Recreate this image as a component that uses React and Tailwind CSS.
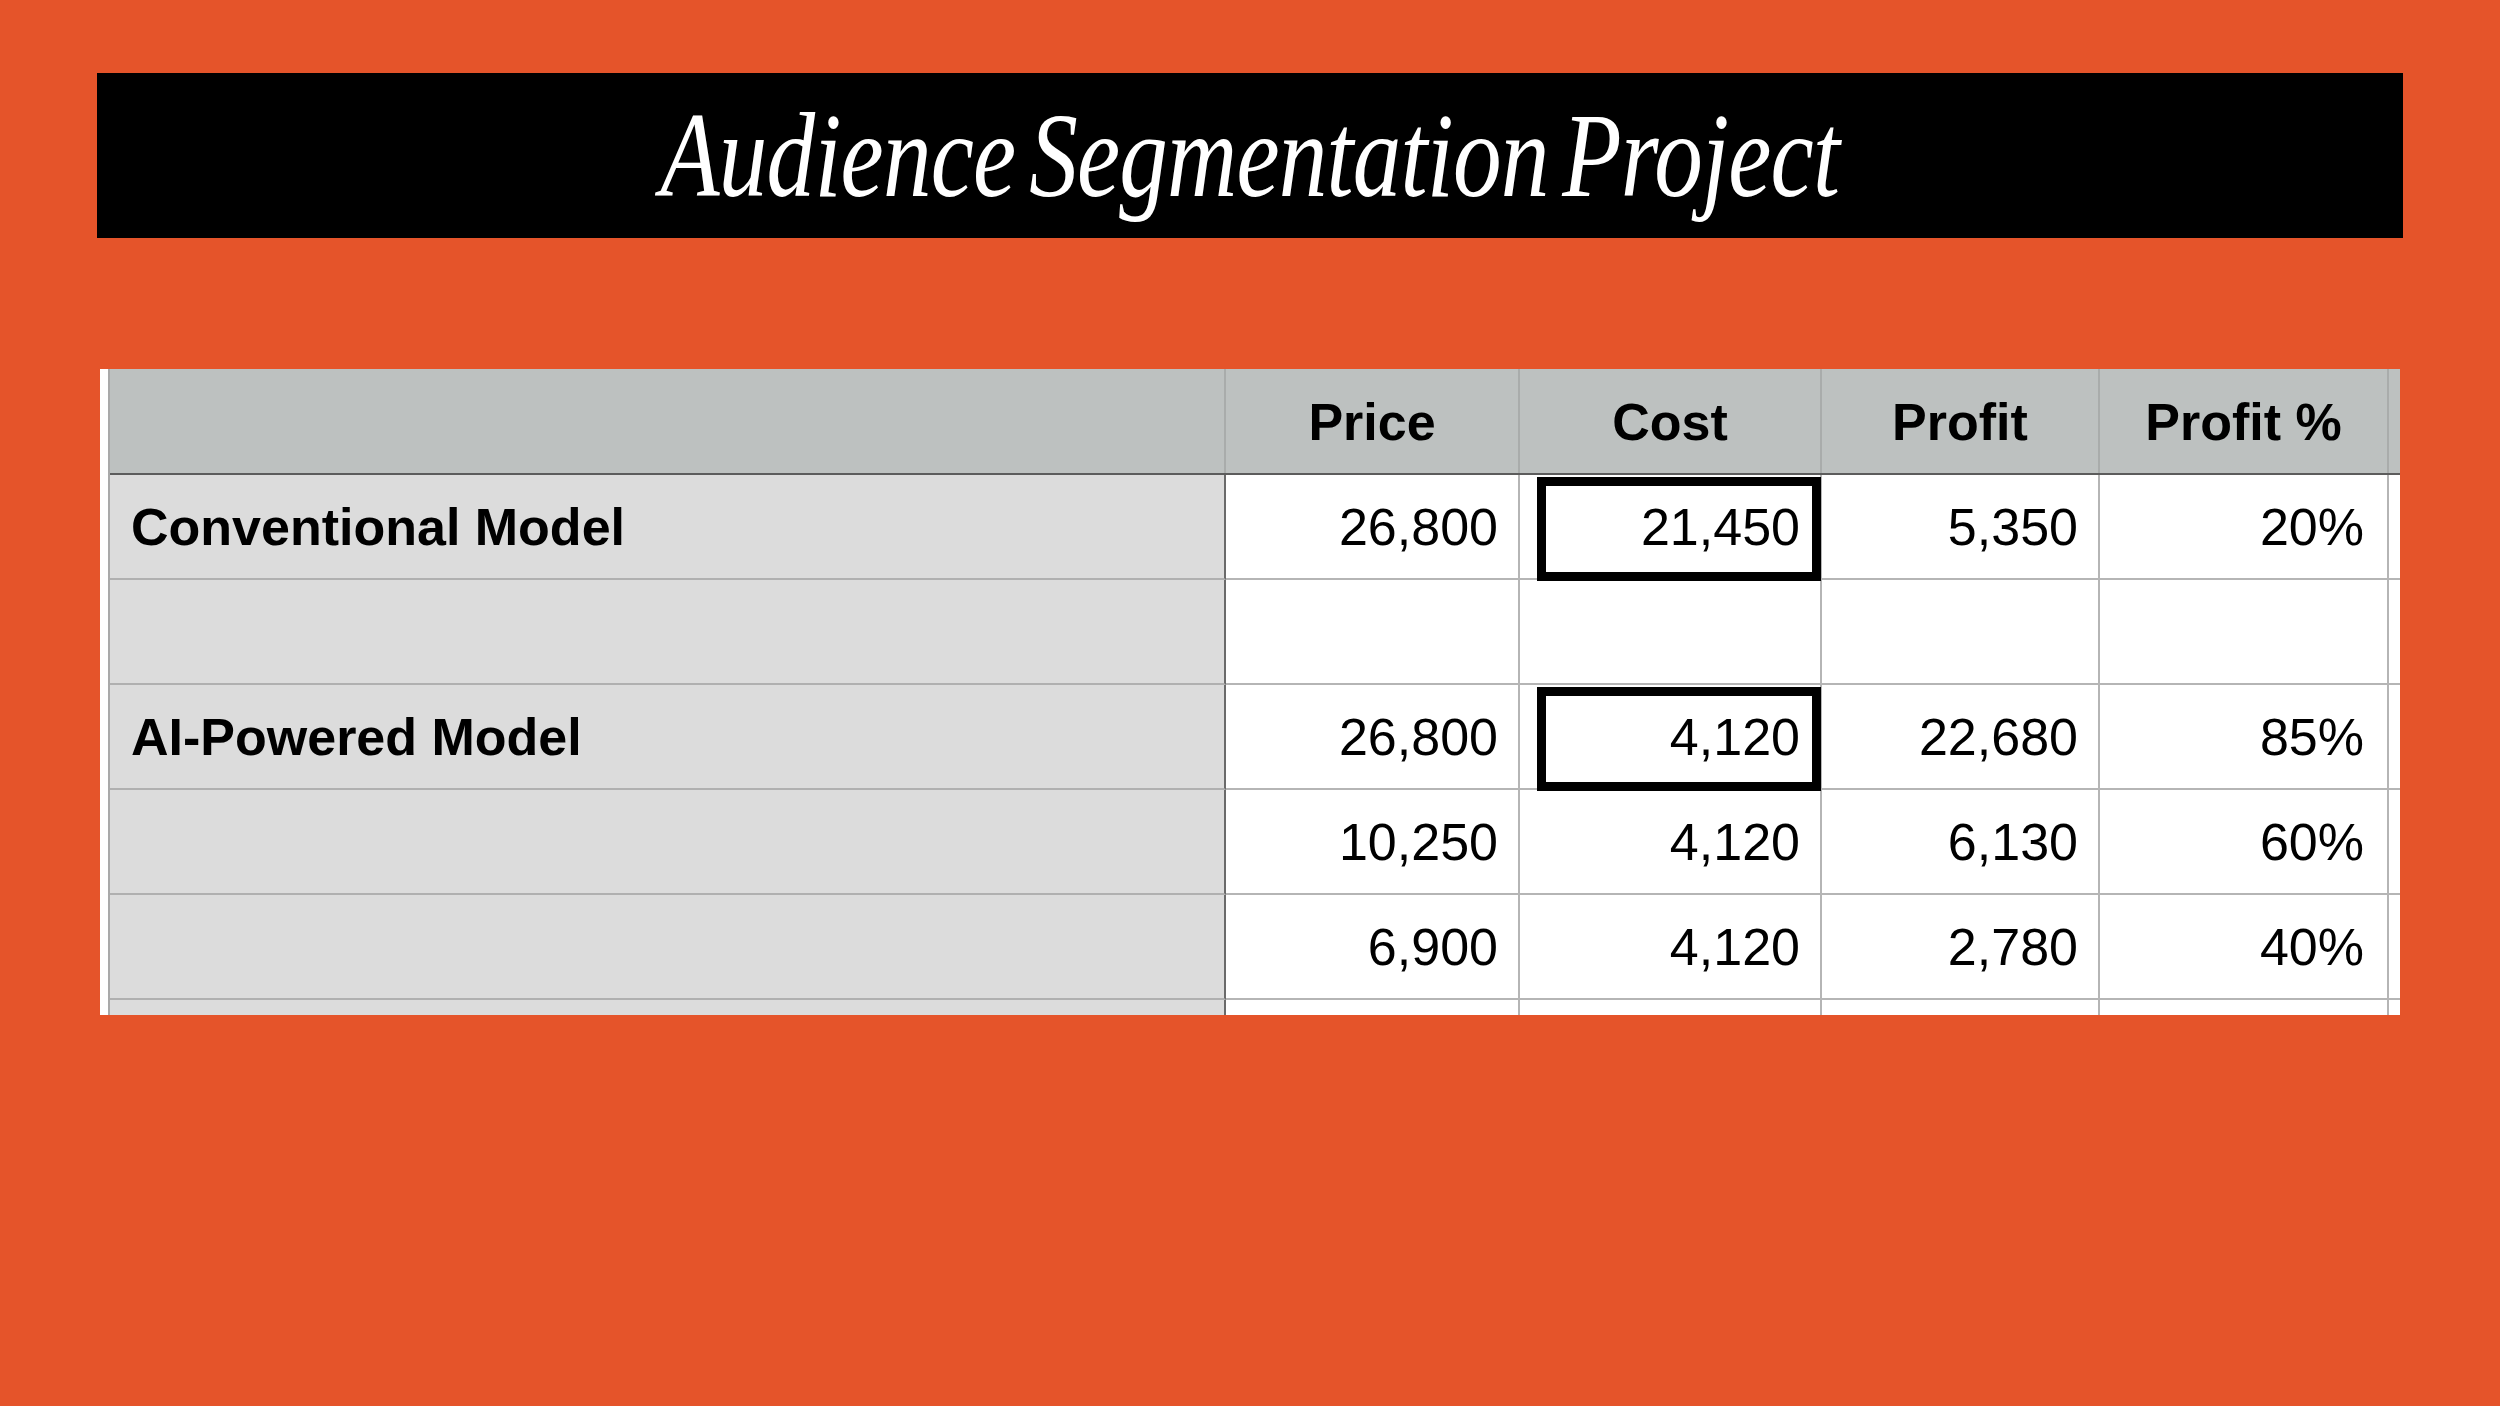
const ROWS = [
	{ label: "Conventional Model", values: ["26,800", "21,450", "5,350", "20%"], boxed: true },
	{ label: "", values: ["", "", "", ""] },
	{ label: "AI-Powered Model", values: ["26,800", "4,120", "22,680", "85%"], boxed: true },
	{ label: "", values: ["10,250", "4,120", "6,130", "60%"] },
	{ label: "", values: ["6,900", "4,120", "2,780", "40%"] },
	{ label: "", values: ["", "", "", ""] },
];

const HEADERS = ["Price", "Cost", "Profit", "Profit %"];

const GRID = "grid grid-cols-[1116px_294px_302px_278px_289px_11px]";

export default function App() {
	return (
		<div className="w-[2500px] h-[1406px] bg-[#e5542a] pt-[73px] pl-[97px] font-['Liberation_Sans',Arial,sans-serif] text-black">
			{/* title bar */}
			<div className="w-[2306px] h-[165px] bg-black flex items-center justify-center overflow-hidden">
				<h1 className="font-['Liberation_Serif',serif] italic text-[120px] leading-none text-white tracking-[-1px] [word-spacing:-12px] scale-x-[0.81] whitespace-nowrap">
					Audience Segmentation Project
				</h1>
			</div>

			{/* spreadsheet */}
			<div className="flex w-[2300px] h-[646px] overflow-hidden ml-[3px] mt-[131px]">
				<div className="w-[8px] shrink-0 bg-white" />
				<div className="flex-1 border-l-2 border-[#a9a9a9]">
					<div className={`${GRID} h-[106px] bg-[#bdc1c0] border-b-2 border-[#5c5c5c]`}>
						<div className="border-r-2 border-[#a9acab]" />
						{HEADERS.map((h) => (
							<div
								key={h}
								className="flex items-center justify-center pt-[2px] border-r-2 border-[#a9acab] text-[52px] font-bold">
								{h}
							</div>
						))}
						<div />
					</div>

					{ROWS.map((row, i) => (
						<div key={i} className={`${GRID} h-[105px]`}>
							<div className="flex items-center pl-[21px] bg-[#dcdcdc] border-r-2 border-b-2 border-r-[#6a6a6a] border-b-[#b0b0b0] text-[52px] font-bold">
								{row.label}
							</div>
							{row.values.map((v, j) => (
								<div
									key={j}
									className={`relative flex items-center justify-end ${j === 3 ? "pr-[23px]" : "pr-[20px]"} bg-white border-r-2 border-b-2 border-[#b5b5b5] text-[52px]`}>
									{row.boxed && j === 1 && (
										<div className="absolute top-[2px] -bottom-[3px] left-[17px] -right-[1px] border-[9px] border-black z-10" />
									)}
									<span className="relative z-20">{v}</span>
								</div>
							))}
							<div className="bg-white border-b-2 border-[#b5b5b5]" />
						</div>
					))}
				</div>
			</div>
		</div>
	);
}
